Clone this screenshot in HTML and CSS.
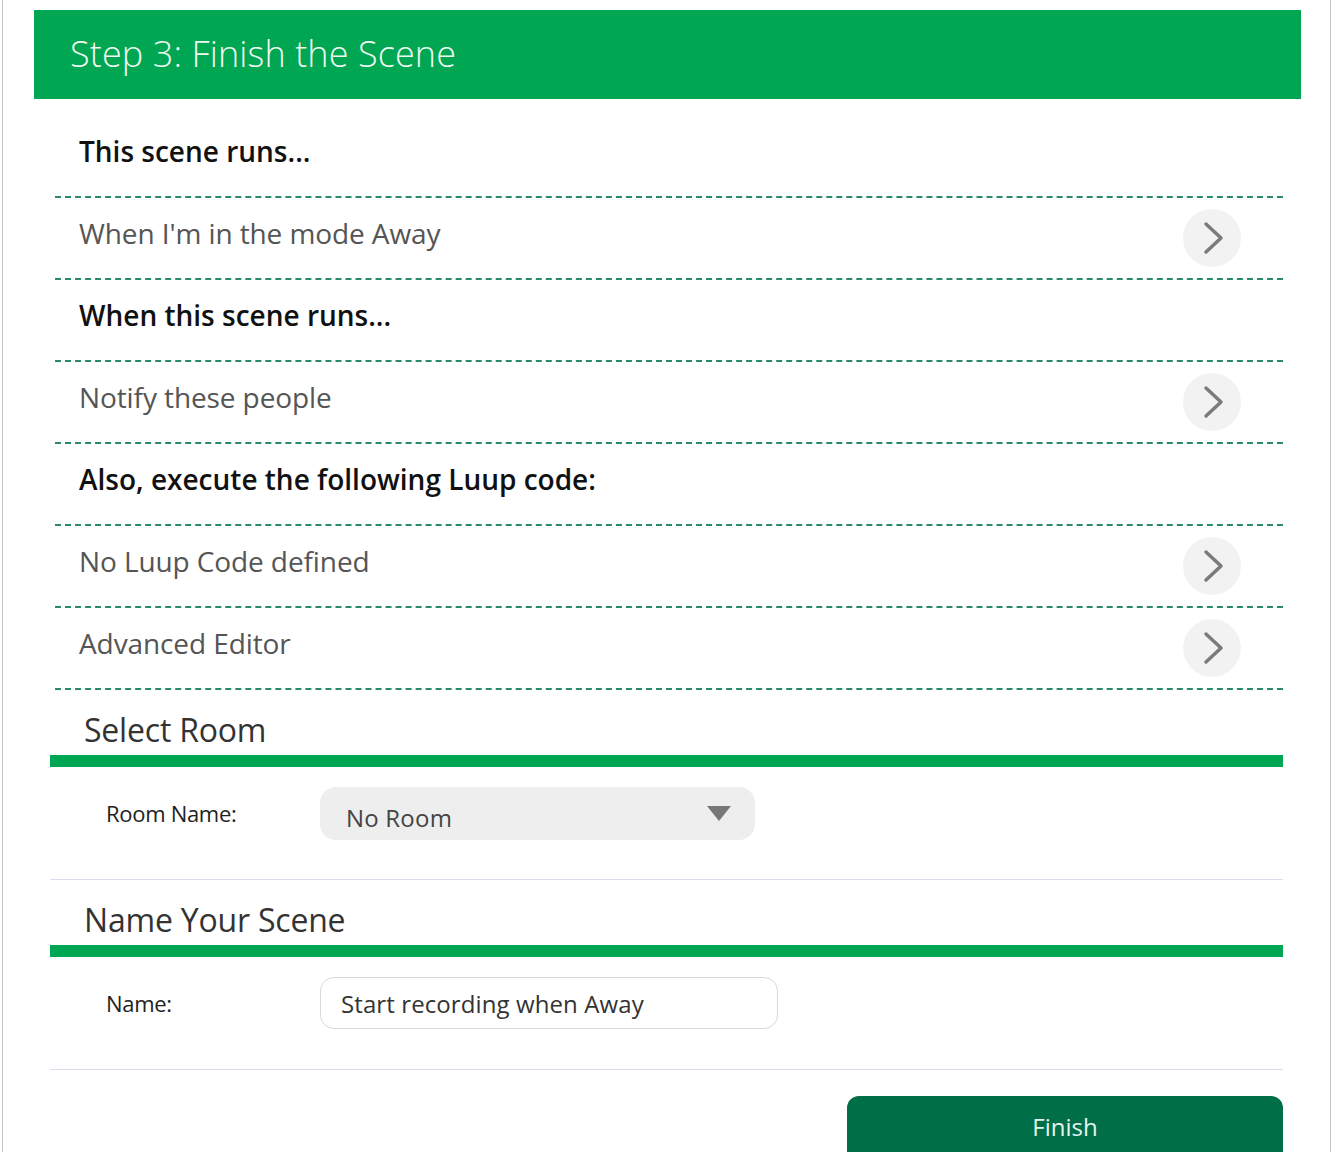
FILE: index.html
```html
<!DOCTYPE html>
<html lang="en">
<head>
<meta charset="utf-8">
<title>Step 3: Finish the Scene</title>
<link rel="stylesheet" href="styles.css">
</head>
<body>
<div class="frame">
  <div class="step-header">Step 3: Finish the Scene</div>
  <div class="content">
    <div class="scene-list">
      <div class="row heading"><span class="row-text">This scene runs...</span></div>
      <div class="row item"><span class="row-text">When I'm in the mode Away</span>
        <span class="chev"><svg width="58" height="58" viewBox="0 0 58 58"><polyline points="23,15 38,29 23,43" fill="none" stroke="#7b7b7b" stroke-width="3.5" stroke-linecap="round" stroke-linejoin="round"/></svg></span></div>
      <div class="row heading"><span class="row-text">When this scene runs...</span></div>
      <div class="row item"><span class="row-text">Notify these people</span>
        <span class="chev"><svg width="58" height="58" viewBox="0 0 58 58"><polyline points="23,15 38,29 23,43" fill="none" stroke="#7b7b7b" stroke-width="3.5" stroke-linecap="round" stroke-linejoin="round"/></svg></span></div>
      <div class="row heading"><span class="row-text">Also, execute the following Luup code:</span></div>
      <div class="row item"><span class="row-text">No Luup Code defined</span>
        <span class="chev"><svg width="58" height="58" viewBox="0 0 58 58"><polyline points="23,15 38,29 23,43" fill="none" stroke="#7b7b7b" stroke-width="3.5" stroke-linecap="round" stroke-linejoin="round"/></svg></span></div>
      <div class="row item"><span class="row-text">Advanced Editor</span>
        <span class="chev"><svg width="58" height="58" viewBox="0 0 58 58"><polyline points="23,15 38,29 23,43" fill="none" stroke="#7b7b7b" stroke-width="3.5" stroke-linecap="round" stroke-linejoin="round"/></svg></span></div>
    </div>

    <div class="section">
      <div class="section-title">Select Room</div>
      <div class="form-row">
        <span class="field-label">Room Name:</span>
        <div class="select-box"><span>No Room</span><span class="caret"></span></div>
      </div>
    </div>

    <div class="section">
      <div class="section-title">Name Your Scene</div>
      <div class="form-row">
        <span class="field-label">Name:</span>
        <div class="text-input">Start recording when Away</div>
      </div>
    </div>

    <div class="actions">
      <div class="finish-btn">Finish</div>
    </div>
  </div>
</div>
</body>
</html>
```

FILE: styles.css
```css
html, body {
  margin: 0;
  padding: 0;
  background: #ffffff;
  overflow: hidden;
}
body {
  font-family: "Open Sans", "Noto Sans", "Liberation Sans", sans-serif;
  color: #222;
}
.frame {
  margin-left: 2px;
  width: 1329px;
  min-height: 1152px;
  border-left: 1px solid #c4c4c4;
  border-right: 1px solid #c4c4c4;
  padding-top: 10px;
  box-sizing: border-box;
}
.step-header {
  margin: 0 29px 0 31px;
  height: 89px;
  background: #00a651;
  color: #eef9f1;
  font-size: 36px;
  font-weight: 300;
  display: flex;
  align-items: center;
  padding-left: 36px;
  padding-bottom: 2px;
  box-sizing: border-box;
  letter-spacing: 0.1px;
}
.content {
  margin: 0 47px 0 47px;
  padding-top: 17px;
}
.scene-list {
  margin-left: 5px;
}
.row {
  height: 80px;
  border-bottom: 2px dashed #2a8a64;
  display: flex;
  align-items: center;
  justify-content: space-between;
  padding-left: 24px;
  padding-right: 42px;
}
.row-text {
  margin-bottom: 10px;
}
.row.heading .row-text {
  font-size: 28px;
  font-weight: 600;
  color: #111;
  letter-spacing: 0;
}
.row.item .row-text {
  font-size: 28px;
  color: #555;
  letter-spacing: -0.1px;
}
.chev {
  width: 58px;
  height: 58px;
  border-radius: 50%;
  background: #f2f2f2;
  display: block;
}
.chev svg {
  display: block;
}
.section-title {
  height: 77px;
  display: flex;
  align-items: flex-end;
  padding-left: 34px;
  font-size: 32px;
  color: #333;
  line-height: 1;
  padding-bottom: 9px;
  box-sizing: border-box;
  border-bottom: 12px solid #00a651;
  letter-spacing: -0.2px;
}
.form-row {
  display: flex;
  align-items: center;
  height: 113px;
  padding-left: 56px;
  padding-bottom: 20px;
  box-sizing: border-box;
  border-bottom: 1px solid #dcdcec;
}
.field-label {
  width: 214px;
  font-size: 22px;
  font-weight: 500;
  color: #222;
  letter-spacing: -0.3px;
}
.select-box {
  width: 435px;
  height: 53px;
  border-radius: 16px;
  background: #eeeeee;
  display: flex;
  align-items: center;
  justify-content: space-between;
  padding: 8px 24px 0 26px;
  box-sizing: border-box;
  font-size: 24px;
  color: #444;
  letter-spacing: 0.2px;
}
.caret {
  width: 0;
  height: 0;
  border-left: 12px solid transparent;
  border-right: 12px solid transparent;
  border-top: 15px solid #777;
  margin-bottom: 8px;
}
.text-input {
  width: 458px;
  height: 52px;
  border: 1px solid #d8d8d8;
  border-radius: 14px;
  box-sizing: border-box;
  display: flex;
  align-items: center;
  padding-left: 20px;
  font-size: 24px;
  color: #333;
  letter-spacing: 0.1px;
}
.actions {
  display: flex;
  justify-content: flex-end;
  padding-top: 26px;
}
.finish-btn {
  width: 436px;
  height: 56px;
  background: #006e46;
  border-radius: 12px 12px 0 0;
  color: #e4f4ec;
  font-size: 24px;
  display: flex;
  align-items: center;
  justify-content: center;
  padding-top: 5px;
  box-sizing: border-box;
}
```
